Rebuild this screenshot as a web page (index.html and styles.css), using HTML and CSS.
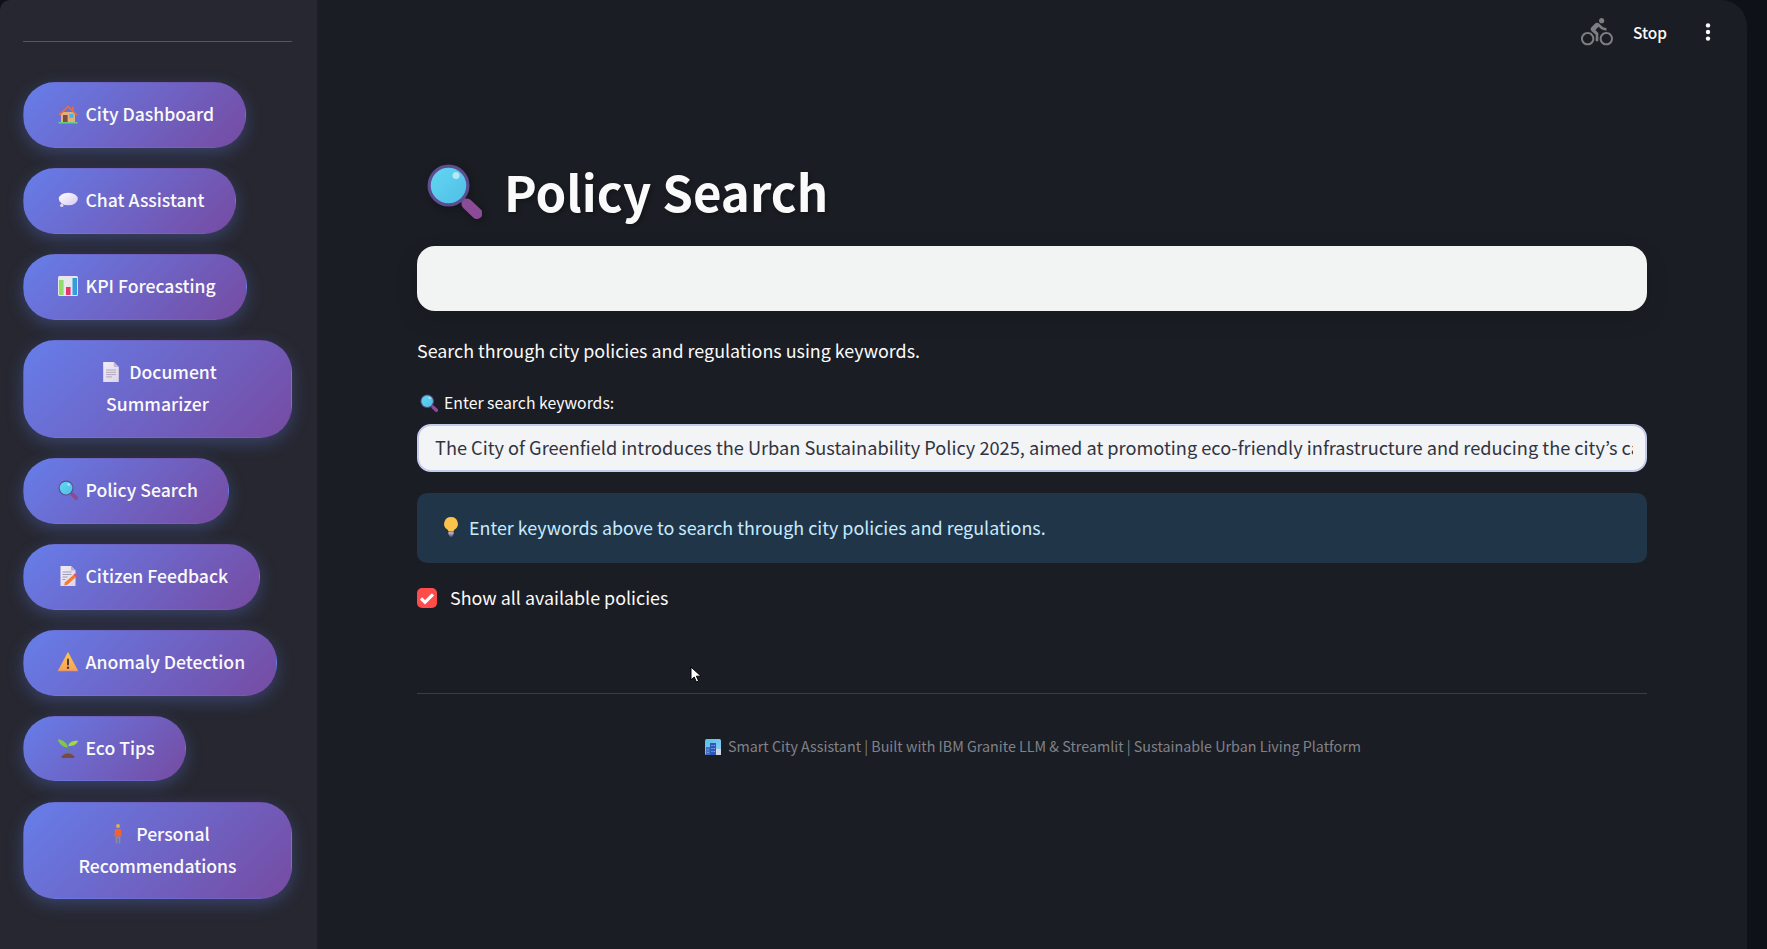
FILE: index.html
```html
<!DOCTYPE html>
<html lang="en">
<head>
<meta charset="utf-8">
<title>Policy Search</title>
<link rel="stylesheet" href="styles.css">
</head>
<body>
<svg class="sprite" aria-hidden="true">
  <defs>
    <linearGradient id="lens" x1="0" y1="0" x2="1" y2="1"><stop offset="0" stop-color="#63d6f2"/><stop offset="1" stop-color="#4fbfe6"/></linearGradient>
    <linearGradient id="bubble" x1="0" y1="0" x2="1" y2="1"><stop offset="0" stop-color="#ffffff"/><stop offset="1" stop-color="#d9c9f2"/></linearGradient>
    <linearGradient id="page" x1="0" y1="0" x2="1" y2="1"><stop offset="0" stop-color="#f1edf6"/><stop offset="1" stop-color="#ddd4ea"/></linearGradient>
    <linearGradient id="warn" x1="0" y1="0" x2="0" y2="1"><stop offset="0" stop-color="#fdc84a"/><stop offset="1" stop-color="#f9a05a"/></linearGradient>
    <linearGradient id="sky" x1="0" y1="0" x2="1" y2="1"><stop offset="0" stop-color="#4fc3ea"/><stop offset="1" stop-color="#9cc9f2"/></linearGradient>
    <symbol id="i-house" viewBox="0 0 20 20">
      <rect x="3" y="8" width="14" height="10" fill="#e4ad7c"/>
      <path d="M10 1.200 0.400 10.600l1.200 1.100L10 3.800l8.400 7.900 1.200-1.100L15.600 6.800V2.400h-1.800v2.700z" fill="#e56d45"/>
      <rect x="5" y="11" width="4.600" height="7" fill="#7a4f3e"/>
      <rect x="11.500" y="10" width="4" height="3.800" fill="#3cb8ea"/>
      <rect x="0.500" y="18" width="19" height="1.500" fill="#63cf85"/>
    </symbol>
    <symbol id="i-bubble" viewBox="0 0 20 20">
      <ellipse cx="10.300" cy="9" rx="9.500" ry="6.300" fill="url(#bubble)"/>
      <circle cx="3.800" cy="15.400" r="1.700" fill="#e2d6f3"/>
    </symbol>
    <symbol id="i-chart" viewBox="0 0 20 20">
      <rect x="0" y="0" width="20" height="20" rx="1.500" fill="#e7e6ea"/>
      <rect x="1" y="4" width="4.600" height="15" fill="#8fdc6a"/>
      <rect x="8" y="11" width="4.600" height="8" fill="#e8346c"/>
      <rect x="14.500" y="2" width="4.600" height="17" fill="#2f9fe0"/>
    </symbol>
    <symbol id="i-doc" viewBox="0 0 20 20">
      <path d="M2.200 0h10.600l5 5v15H2.200z" fill="url(#page)"/>
      <path d="M12.800 0v5h5z" fill="#c3b8d2"/>
      <path d="M5 8h10M5 10.300h10M5 12.600h10M5 14.900h6" stroke="#a8a2b4" stroke-width="0.900"/>
    </symbol>
    <symbol id="i-search" viewBox="0 0 56 56">
      <path d="M36 36l6 6" stroke="#5c3f80" stroke-width="6"/>
      <path d="M41 41l10 9.500" stroke="#8b4b97" stroke-width="11" stroke-linecap="round"/>
      <circle cx="22.500" cy="22.500" r="21" fill="#5c4c90"/>
      <circle cx="22.500" cy="22.500" r="17.800" fill="url(#lens)"/>
      <circle cx="30" cy="12.500" r="3.500" fill="#b6e8f5"/>
    </symbol>
    <symbol id="i-memo" viewBox="0 0 20 20">
      <path d="M2.500 0h10.500l4.500 4.500V20H2.500z" fill="url(#page)"/>
      <path d="M13 0v4.500h4.500z" fill="#bdb2cc"/>
      <path d="M4.500 6h9M4.500 8.500h9M4.500 11h5M4.500 13.500h3" stroke="#9a93a8" stroke-width="0.900"/>
      <path d="M17 7.500l2.300 2.300-9.800 9-3.300 0.700 0.700-3z" fill="#f47a36"/>
      <path d="M17 7.500l2.300 2.300-1.400 1.300-2.300-2.300z" fill="#e8447a"/>
    </symbol>
    <symbol id="i-warn" viewBox="0 0 20 20">
      <path d="M10 0.500 19.800 18.800H0.200z" fill="url(#warn)" stroke="url(#warn)" stroke-width="0.600" stroke-linejoin="round"/>
      <rect x="9" y="6.500" width="2" height="7" rx="1" fill="#4a3a38"/>
      <circle cx="10" cy="15.700" r="1.200" fill="#4a3a38"/>
    </symbol>
    <symbol id="i-seed" viewBox="0 0 20 20">
      <path d="M9.400 9h1.200v8H9.400z" fill="#4f9a3e"/>
      <path d="M9.800 9.600C9.300 5.600 5.400 1.900 0 1.300c0.800 4.600 4.600 7.800 9.800 8.300z" fill="#7ecb3f"/>
      <path d="M10.200 7.800C11 4.600 14.600 2.600 20 2.800c-1.200 3.700-5 5.900-9.800 5z" fill="#9bdb45"/>
      <path d="M3.500 20c0.400-2.700 3-4.400 6.500-4.400s6.100 1.700 6.500 4.400z" fill="#7a4a3c"/>
    </symbol>
    <symbol id="i-person" viewBox="0 0 20 20">
      <circle cx="10" cy="2" r="1.900" fill="#e7b04d"/>
      <path d="M7 5h6l0.600 7.500H6.400z" fill="#f2622e"/>
      <path d="M7.700 12.500h4.600v7h-1.600v-5.500h-1.400v5.500H7.700z" fill="#8c8a9c"/>
    </symbol>
    <symbol id="i-bulb" viewBox="0 0 20 20">
      <path d="M10 0a6.800 6.800 0 0 0-3.600 12.600c0.600 0.500 1 1.200 1 2h5.200c0-0.800 0.400-1.500 1-2A6.800 6.800 0 0 0 10 0z" fill="#fbc34c"/>
      <rect x="7.300" y="14.800" width="5.400" height="3" rx="1" fill="#b6a6c2"/>
      <rect x="8.300" y="17.800" width="3.400" height="1.800" rx="0.800" fill="#8a6fa0"/>
    </symbol>
    <symbol id="i-city" viewBox="0 0 16 16">
      <rect width="16" height="16" rx="1.500" fill="url(#sky)"/>
      <rect x="5" y="4" width="6" height="12" fill="#2f57b8"/>
      <rect x="1" y="8" width="4" height="8" fill="#3a6fca"/>
      <rect x="11" y="10" width="5" height="6" fill="#cfd8e6"/>
      <path d="M6.500 6h1v1h-1zM8.800 6h1v1h-1zM6.500 9h1v1h-1zM8.800 9h1v1h-1zM6.500 12h1v1h-1zM8.800 12h1v1h-1zM2.500 10.500h1v1h-1zM2.500 13h1v1h-1z" fill="#9cc9f2"/>
    </symbol>
  </defs>
</svg>
<div class="app">
  <aside class="sidebar">
    <hr class="side-rule">
    <nav class="nav">
      <button class="nav-btn"><svg class="emoji nav-emoji"><use href="#i-house"/></svg>City Dashboard</button>
      <button class="nav-btn"><svg class="emoji nav-emoji"><use href="#i-bubble"/></svg>Chat Assistant</button>
      <button class="nav-btn"><svg class="emoji nav-emoji"><use href="#i-chart"/></svg>KPI Forecasting</button>
      <button class="nav-btn"><svg class="emoji nav-emoji"><use href="#i-doc"/></svg>Document Summarizer</button>
      <button class="nav-btn"><svg class="emoji nav-emoji"><use href="#i-search"/></svg>Policy Search</button>
      <button class="nav-btn"><svg class="emoji nav-emoji"><use href="#i-memo"/></svg>Citizen Feedback</button>
      <button class="nav-btn"><svg class="emoji nav-emoji"><use href="#i-warn"/></svg>Anomaly Detection</button>
      <button class="nav-btn"><svg class="emoji nav-emoji"><use href="#i-seed"/></svg>Eco Tips</button>
      <button class="nav-btn"><svg class="emoji nav-emoji"><use href="#i-person"/></svg>Personal Recommendations</button>
    </nav>
  </aside>
  <main class="main">
    <header class="topbar">
      <svg class="bike" viewBox="0 0 24 24" aria-hidden="true">
        <path fill="#7c7e82" d="M15.500 5.500c1.100 0 2-.9 2-2s-.9-2-2-2-2 .9-2 2 .9 2 2 2zM5 12c-2.800 0-5 2.200-5 5s2.200 5 5 5 5-2.200 5-5-2.200-5-5-5zm0 8.500c-1.900 0-3.500-1.600-3.500-3.500s1.600-3.500 3.500-3.500 3.500 1.600 3.500 3.500-1.600 3.500-3.500 3.500zm5.800-10l2.400-2.400.8.8c1.300 1.300 3 2.100 5.100 2.100V9c-1.500 0-2.700-.6-3.600-1.500l-1.900-1.900c-.5-.4-1-.6-1.600-.6s-1.100.2-1.400.6L7.800 8.400c-.4.4-.6.9-.6 1.400 0 .6.2 1.100.6 1.400L11 14v5h2v-6.200l-2.200-2.300zM19 12c-2.800 0-5 2.200-5 5s2.200 5 5 5 5-2.200 5-5-2.200-5-5-5zm0 8.500c-1.900 0-3.500-1.600-3.500-3.500s1.600-3.500 3.500-3.500 3.500 1.600 3.500 3.500-1.600 3.500-3.500 3.500z"/>
      </svg>
      <span class="stop">Stop</span>
      <svg class="dots" viewBox="0 0 6 18" aria-hidden="true">
        <circle cx="3" cy="2.400" r="2.200" fill="#fafafa"/>
        <circle cx="3" cy="9" r="2.200" fill="#fafafa"/>
        <circle cx="3" cy="15.600" r="2.200" fill="#fafafa"/>
      </svg>
    </header>
    <section class="content">
      <h1 class="title"><svg class="title-emoji"><use href="#i-search"/></svg>Policy Search</h1>
      <div class="blank-card"></div>
      <p class="lead">Search through city policies and regulations using keywords.</p>
      <label class="field-label" for="kw"><svg class="label-emoji"><use href="#i-search"/></svg>Enter search keywords:</label>
      <input id="kw" class="field" type="text" value="The City of Greenfield introduces the Urban Sustainability Policy 2025, aimed at promoting eco-friendly infrastructure and reducing the city’s carbon footprint by 40 percent.">
      <div class="info"><svg class="emoji"><use href="#i-bulb"/></svg>Enter keywords above to search through city policies and regulations.</div>
      <div class="check-row">
        <span class="checkbox">
          <svg viewBox="0 0 20 20" aria-hidden="true"><path d="M4 10.300l4 4 8-8" fill="none" stroke="#fff" stroke-width="3.200"/></svg>
        </span>
        <span class="check-label">Show all available policies</span>
      </div>
      <hr class="rule">
      <p class="footer"><svg class="footer-emoji"><use href="#i-city"/></svg>Smart City Assistant | Built with IBM Granite LLM &amp; Streamlit | Sustainable Urban Living Platform</p>
    </section>
    <svg class="cursor" viewBox="0 0 12 18" aria-hidden="true"><path d="M1 1v13l3.200-3 2.200 5 2.200-1-2.200-4.800H11z" fill="#fff" stroke="#000" stroke-width="1"/></svg>
  </main>
</div>
</body>
</html>
```

FILE: styles.css
```css
* { box-sizing: border-box; }
html, body { margin: 0; height: 100%; overflow: hidden; }
body {
  background: #0e1117;
  color: #fafafa;
  font-family: "Noto Sans CJK SC", "Noto Sans", sans-serif;
  font-size: 17.9px;
}
.sprite { position: absolute; width: 0; height: 0; }
.emoji { width: 20px; height: 20px; margin-right: 8px; vertical-align: -3px; flex: none; }
.nav-emoji { margin-left: 3px; }
.app { display: flex; height: 949px; }
.sidebar {
  width: 317px;
  flex: none;
  background: #262730;
  border-top-left-radius: 10px;
  padding: 41px 25px 0 23px;
}
.side-rule { margin: 0 0 40px; border: 0; border-top: 1px solid #55565d; }
.nav { display: flex; flex-direction: column; align-items: flex-start; gap: 20.4px; }
.nav-btn {
  max-width: 269px;
  padding: 14.8px 30.5px 16.8px;
  border: 1px solid transparent;
  border-radius: 32px;
  background: linear-gradient(135deg, #667eea 0%, #764ba2 100%);
  box-shadow: 0 5px 17px rgba(102, 126, 234, 0.32);
  color: #fafafa;
  font: 500 17.6px/32px "Noto Sans CJK SC", "Noto Sans", sans-serif;
}
.main {
  position: relative;
  width: 1430px;
  flex: none;
  background: #1a1d23;
  border-top-right-radius: 26px;
}
.topbar {
  display: flex;
  align-items: center;
  justify-content: flex-end;
  height: 64px;
  padding-right: 36px;
}
.bike { width: 32px; height: 32px; margin-right: 20px; }
.stop { font-size: 15.4px; font-weight: 500; margin-right: 38px; padding-bottom: 1px; }
.dots { width: 6px; height: 18px; }
.content { padding: 0 100px; }
.title {
  display: flex;
  align-items: center;
  height: 72px;
  margin: 90.5px 0 0;
  font-size: 49.2px;
  font-weight: 700;
  line-height: 72px;
  text-shadow: 2px 2px 4px rgba(0, 0, 0, 0.3);
}
.title-emoji {
  width: 56px;
  height: 56px;
  flex: none;
  margin: 0 22px 0 9px;
  filter: drop-shadow(2px 2px 4px rgba(0, 0, 0, 0.3));
}
.blank-card {
  height: 65px;
  margin-top: 19.5px;
  background: #f2f4f3;
  border-radius: 18px;
  box-shadow: 0 8px 24px rgba(0, 0, 0, 0.1);
}
.lead { margin: 23px 0 0; line-height: 32px; font-weight: 400; }
.field-label { display: block; margin-top: 23px; font-size: 15.8px; font-weight: 400; line-height: 28px; }
.label-emoji { width: 18px; height: 18px; margin: 0 6px 0 3px; vertical-align: -3px; }
.field {
  display: block;
  width: 100%;
  height: 48px;
  margin-top: 7px;
  padding: 0 12px 2px 16px;
  background: #f2f4f6;
  border: 2px solid #c5cbeb;
  border-radius: 14px;
  color: #31333f;
  font: 400 18.2px "Noto Sans CJK KR", "Noto Sans", sans-serif;
  outline: none;
}
.info {
  display: flex;
  align-items: center;
  height: 70px;
  margin-top: 21px;
  padding: 0 0 2px 24px;
  background: #213549;
  border-radius: 10px;
  color: #c7ebff;
}
.check-row { display: flex; align-items: center; margin-top: 25px; height: 20px; }
.checkbox {
  display: flex;
  width: 20px;
  height: 20px;
  margin-right: 13px;
  background: #ff4b4b;
  border-radius: 5px;
}
.checkbox svg { width: 20px; height: 20px; }
.check-label { padding-bottom: 2px; }
.rule { margin: 85px 0 0; border: 0; border-top: 1px solid #3b3d44; }
.footer { margin: 39px 0 0; padding-left: 2px; text-align: center; font-size: 14.3px; line-height: 26px; color: #808289; }
.footer-emoji { width: 16px; height: 16px; margin-right: 7px; vertical-align: -3px; }
.cursor { position: absolute; left: 373px; top: 666px; width: 12px; height: 18px; }
```
